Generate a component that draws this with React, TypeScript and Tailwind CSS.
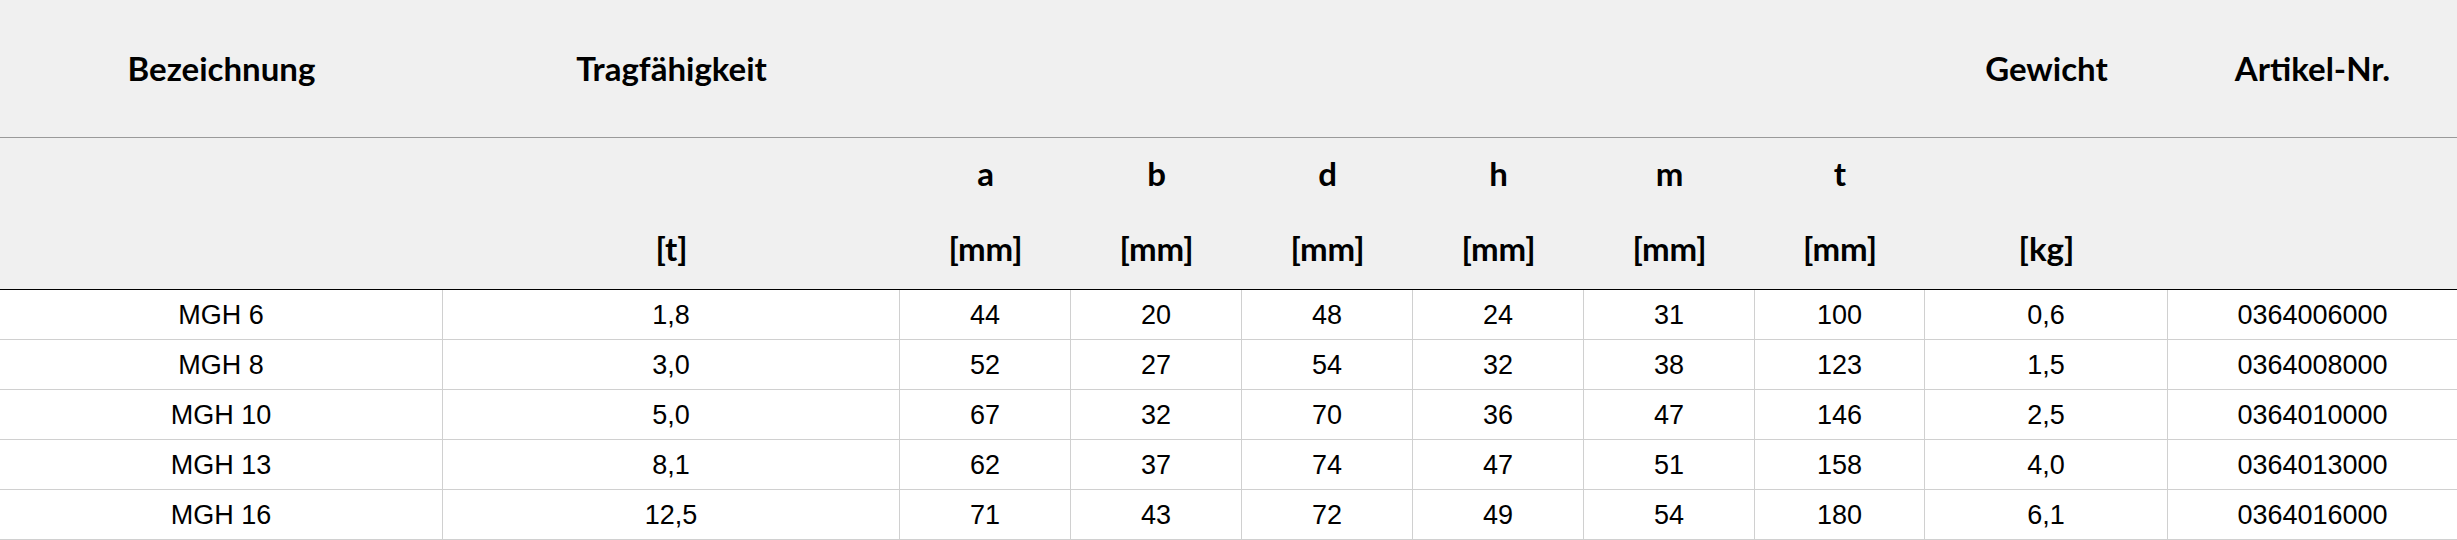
import React from "react";

const cols =
  "grid grid-cols-[443px_457px_171px_171px_171px_171px_171px_170px_243px_289px]";

const rows = [
  ["MGH 6", "1,8", "44", "20", "48", "24", "31", "100", "0,6", "0364006000"],
  ["MGH 8", "3,0", "52", "27", "54", "32", "38", "123", "1,5", "0364008000"],
  ["MGH 10", "5,0", "67", "32", "70", "36", "47", "146", "2,5", "0364010000"],
  ["MGH 13", "8,1", "62", "37", "74", "47", "51", "158", "4,0", "0364013000"],
  ["MGH 16", "12,5", "71", "43", "72", "49", "54", "180", "6,1", "0364016000"],
];

const head1 = ["Bezeichnung", "Tragfähigkeit", "", "", "", "", "", "", "Gewicht", "Artikel-Nr."];
const head2 = ["", "", "a", "b", "d", "h", "m", "t", "", ""];
const head3 = ["", "[t]", "[mm]", "[mm]", "[mm]", "[mm]", "[mm]", "[mm]", "[kg]", ""];

function HeadRow({ cells, className }: { cells: string[]; className: string }) {
  return (
    <div className={`${cols} ${className}`}>
      {cells.map((c, i) => (
        <div key={i} className="flex items-center justify-center">
          {c}
        </div>
      ))}
    </div>
  );
}

export default function App() {
  return (
    <div className="w-[2457px] h-[540px] overflow-hidden bg-white text-black">
      <div className="bg-[#f0f0f0] font-['Lato',sans-serif] font-bold text-[33px] leading-none">
        <HeadRow cells={head1} className="h-[138px] border-b border-[#9a9a9a]" />
        <HeadRow cells={head2} className="h-[76px] pb-[6px]" />
        <HeadRow cells={head3} className="h-[76px] pb-[6px] border-b border-black" />
      </div>
      <div className="font-['Liberation_Sans',Arial,sans-serif] text-[27px] leading-none">
        {rows.map((r, ri) => (
          <div key={ri} className={`${cols} h-[50px] border-b border-[#d0d0d0]`}>
            {r.map((c, ci) => (
              <div
                key={ci}
                className={`flex items-center justify-center pt-[2px] ${ci < 9 ? "border-r border-[#d0d0d0]" : ""}`}
              >
                {c}
              </div>
            ))}
          </div>
        ))}
      </div>
    </div>
  );
}
